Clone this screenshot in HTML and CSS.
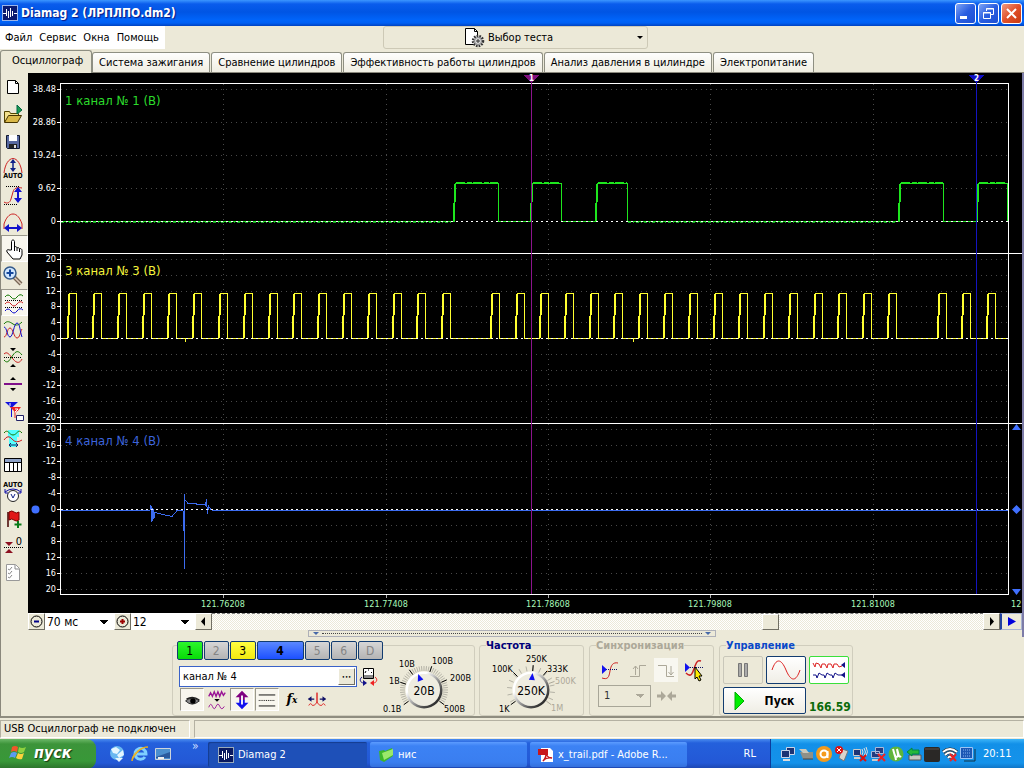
FILE: index.html
```html
<!DOCTYPE html>
<html lang="ru">
<head>
<meta charset="utf-8">
<title>Diamag 2</title>
<link rel="stylesheet" href="styles.css">
</head>
<body>
<header class="titlebar">
  <svg class="app-icon" width="16" height="16" viewBox="0 0 16 16"><rect width="16" height="16" fill="#9ab4e8"/><rect x="1" y="1" width="14" height="14" fill="#0a1a70"/><path d="M1 8.500h3M4.500 4v7M6.500 6v7M8.500 3v9M10.500 6v5M12 8.500h3" fill="none" stroke="#fff"/></svg>
  <h1 class="title">Diamag 2 (ЛРПЛПО.dm2)</h1>
  <button class="win-btn" aria-label="Свернуть"><svg width="19" height="19"><path d="M4 13.500h7" stroke="#fff" stroke-width="3"/></svg></button>
  <button class="win-btn" aria-label="Восстановить"><svg width="19" height="19" fill="none" stroke="#fff"><path d="M7.500 7V4.500h7v6H12M7 5h8M4.500 8.500h7v6h-7zM4 9h8"/></svg></button>
  <button class="win-btn win-close" aria-label="Закрыть"><svg width="19" height="19"><path d="M5 5l9 9M14 5l-9 9" stroke="#fff" stroke-width="2"/></svg></button>
</header>
<div class="menurow">
  <nav class="menu"><button>Файл</button><button>Сервис</button><button>Окна</button><button>Помощь</button></nav>
  <button class="test-select">
    <svg width="21" height="21" viewBox="0 0 21 21"><path d="M1.500 1.500h9l3 3v13h-12z" fill="#fff" stroke="#000"/><path d="M10.500 1.500v3h3" fill="none" stroke="#000"/><circle cx="14" cy="14" r="5" fill="#ccc" stroke="#333" stroke-width="2.500" stroke-dasharray="1.600 1.100"/><circle cx="14" cy="14" r="3.500" fill="#ddd" stroke="#888"/><path d="M14 12v4M12 14h4" stroke="#333"/></svg>
    <span>Выбор теста</span><i class="caret"></i>
  </button>
</div>
<nav class="tabs"><button class="tab active">Осциллограф</button><button class="tab">Система зажигания</button><button class="tab">Сравнение цилиндров</button><button class="tab">Эффективность работы цилиндров</button><button class="tab">Анализ давления в цилиндре</button><button class="tab">Электропитание</button></nav>
<main class="work">
  <aside class="tools">
    <button aria-label="Новый"><svg viewBox="0 0 24 24"><path d="M6.500 5.500h8l3 3v10h-11z" fill="#fff" stroke="#000"/><path d="M14.500 5.500v3h3" fill="none" stroke="#000"/></svg></button>
    <button aria-label="Открыть"><svg viewBox="0 0 24 24"><path d="M3.500 20V9.500h5l1 2h8V14" fill="#f3e08c" stroke="#554400"/><path d="M3.500 20.500l4-7h13l-4 7z" fill="#d9b848" stroke="#443300"/><path d="M16 3l5 5-5 4z" fill="#1c9a50" stroke="#064"/></svg></button>
    <button aria-label="Сохранить"><svg viewBox="0 0 24 24"><path d="M5.500 6.500h13v13h-12l-1-1z" fill="#5869a0" stroke="#101830"/><path d="M8 6h8v6H8z" fill="#fff"/><path d="M8 15h8v4H8z" fill="#222"/><path d="M13 16h2v3h-2z" fill="#ddd"/></svg></button>
    <button aria-label="Авто амплитуда"><svg viewBox="0 0 24 24" fill="none"><path d="M3 17C4 8 8 2.500 12 2.500S20 8 21 17" stroke="#c22"/><path d="M12 4v11" stroke="#128" stroke-width="1.500"/><path d="M9 7l3-4 3 4zM9 12l3 4 3-4z" fill="#128"/><text x="12" y="22" class="mini">AUTO</text></svg></button>
    <button aria-label="По вертикали"><svg viewBox="0 0 24 24" fill="none"><path d="M3 19c3 2 6 1 7-3l2-7c1-4 4-5 9-4" stroke="#c22"/><path d="M5 3.500h14M3 21.500h14" stroke="#000" stroke-dasharray="1 1"/><path d="M17 6v12" stroke="#11c" stroke-width="2"/><path d="M13 9l4-5 4 5zM13 15l4 5 4-5z" fill="#11c"/></svg></button>
    <button aria-label="По горизонтали"><svg viewBox="0 0 24 24" fill="none"><path d="M3 19V14c2-6 5-10 9-10s7 4 9 10v5" stroke="#c22"/><path d="M5 18h14" stroke="#11c" stroke-width="2"/><path d="M3 18l5-4v8zM21 18l-5-4v8z" fill="#11c"/></svg></button>
    <button class="pressed" aria-label="Рука"><svg viewBox="0 0 24 24"><path d="M9.500 13V4.500c0-2 3-2 3 0V10c1-1 2.500 0 2.500 1 1-1 2.500 0 2.500 1 1-1 2.500 0 2.500 1.500V18l-2 4h-7l-6-7c-1-2 1-3 2-2z" fill="#fff" stroke="#000"/><path d="M12.500 10v4M15 11v3M17.500 12v3" stroke="#000"/></svg></button>
    <button aria-label="Масштаб"><svg viewBox="0 0 24 24"><path d="M13 13l7 7" stroke="#765" stroke-width="4"/><path d="M13 13l7 7" stroke="#dcb" stroke-width="1.500"/><circle cx="9" cy="9" r="6" fill="#cfe6ff" stroke="#345a8a" stroke-width="1.500"/><path d="M5.500 9h7M9 5.500v7" stroke="#13479c" stroke-width="2"/></svg></button>
    <button class="pressed" aria-label="Раздельно"><svg viewBox="0 0 24 24" fill="none"><path d="M3 6q3-4 6 0t6 0 6-1" stroke="#170"/><path d="M3 13q3-4 6 0t6 0 6-1" stroke="#c22"/><path d="M3 20q3-4 6 0t6 0 6-1" stroke="#11c"/><path d="M3 9.500h18M3 16.500h18" stroke="#000" stroke-dasharray="1 1"/></svg></button>
    <button aria-label="Совместно"><svg viewBox="0 0 24 24" fill="none"><path d="M3 6c3-4 6-2 9 0s6 1 9-2" stroke="#170"/><path d="M3 19c3 0 3-9 6-9s4 10 7 10 3-6 5-9" stroke="#c22"/><path d="M3 9c3 0 3 10 6 10s4-14 7-14 3 9 5 14" stroke="#11c"/></svg></button>
    <button aria-label="Наложение"><svg viewBox="0 0 24 24" fill="none"><path d="M3 9c3-3 5 0 9 5s7 4 9 0" stroke="#c22"/><path d="M3 15c4 5 6-1 9-5s5-5 9 0" stroke="#170"/><path d="M3 12.500h18" stroke="#000" stroke-dasharray="1 1"/><path d="M9 3h6l-3 3zM9 22h6l-3-3z" fill="#000"/></svg></button>
    <button aria-label="Линия"><svg viewBox="0 0 24 24"><path d="M3 12h18" stroke="#80108a" stroke-width="2"/><path d="M9 8l3-3 3 3zM9 16l3 3 3-3z"/></svg></button>
    <button aria-label="Курсоры"><svg viewBox="0 0 24 24"><path d="M4 3h13l-6.500 6z" fill="#11d"/><path d="M10.500 8v10" stroke="#11d"/><path d="M9 8h11l-5 6z" fill="#e22"/><path d="M14 12v7" stroke="#e22"/><path d="M9 4v3M14 10h3l-3 3h3" stroke="#fff" fill="none"/><path d="M15.500 16.500h7v5h-7z" fill="#fff" stroke="#226"/></svg></button>
    <button aria-label="Измерение"><svg viewBox="0 0 24 24" fill="none"><path d="M7 4h11v7h-2v10H8V11H7z" fill="#5ff"/><path d="M3 7c4-5 5 2 9 2s5-7 9-2" stroke="#170"/><path d="M3 14q4-6 8-1t10 1" stroke="#c22"/><path d="M8 19h9M10 17l-2 2 2 2M15 17l2 2-2 2" stroke="#126"/></svg></button>
    <button aria-label="Таблица"><svg viewBox="0 0 24 24"><path d="M3.500 5.500h17v13h-17z" fill="#fff" stroke="#000"/><path d="M4 6h16v3H4z" fill="#8ea2c8"/><path d="M3 9.500h17M8.500 9v9M12.500 9v9M16.500 9v9" stroke="#000"/></svg></button>
    <button aria-label="Авто вольтметр"><svg viewBox="0 0 24 24" fill="none"><text x="12" y="7" class="mini">AUTO</text><circle cx="12" cy="16" r="5.500" fill="#fff" stroke="#222"/><path d="M10 14l2 4 2-4" stroke="#128"/><path d="M4 12q8-6 16 0M4 9v4h3M20 9v4h-3" stroke="#11a"/></svg></button>
    <button aria-label="Метка"><svg viewBox="0 0 24 24"><path d="M7 5v15" stroke="#400" stroke-width="1.500"/><path d="M8 5q3-2 5 0t5 0v8q-3 2-5 0t-5 0z" fill="#e01818" stroke="#700"/><path d="M17 14v7M13.500 17.500h7" stroke="#087a18" stroke-width="2"/></svg></button>
    <button aria-label="Ноль"><svg viewBox="0 0 24 24"><path d="M3 13.500h19" stroke="#000" stroke-dasharray="1 1"/><path d="M4 8h8l-4 4zM4 19h8l-4-4z" fill="#8c1020"/><text x="18" y="11" class="zero">0</text></svg></button>
    <button aria-label="Отчёт"><svg viewBox="0 0 24 24"><path d="M5.500 3.500h9l4 4v12h-13z" fill="#fff" stroke="#999"/><path d="M7 8l1.500 1L11 6M7 12l1.500 1L11 10M7 16l1.500 1L11 14M14 4v4h4" fill="none" stroke="#888"/></svg></button>
  </aside>
  <section class="scope">
    <svg id="plot" class="plot" viewBox="28 73 994 540" role="img" aria-label="Осциллограммы"></svg>
    <div class="scrollrow">
      <button class="sq" aria-label="Уменьшить"><svg width="13" height="13" fill="none" stroke="#000"><circle cx="6.500" cy="6.500" r="5.500"/><path d="M4 6.500h5" stroke="#008" stroke-width="2"/></svg></button>
      <select class="combo combo-ms" aria-label="Развёртка"><option>70 мс</option></select>
      <button class="sq" aria-label="Увеличить"><svg width="13" height="13" fill="none" stroke="#000"><circle cx="6.500" cy="6.500" r="5.500"/><path d="M4 6.500h5M6.500 4v5" stroke="#900" stroke-width="2"/></svg></button>
      <select class="combo combo-n" aria-label="Масштаб"><option>12</option></select>
      <button class="sq" aria-label="Влево"><svg width="9" height="9"><path d="M6 0v9L2 4.500z"/></svg></button>
      <div class="track"><span class="thumb"></span></div>
      <button class="sq" aria-label="Вправо"><svg width="9" height="9"><path d="M3 0v9l4-4.500z"/></svg></button>
      <button class="sq play" aria-label="Проиграть"><svg width="9" height="9"><path d="M1 0v9l8-4.500z" fill="#00d"/></svg></button>
    </div>
    <div class="splitter"><i></i><span></span><i></i></div>
  </section>
</main>
<div class="panels">
  <section class="group channel">
    <div class="ch-left">
      <div class="ch-btns"><button class="g">1</button><button>2</button><button class="y">3</button><button class="b">4</button><button>5</button><button>6</button><button>D</button></div>
      <div class="ch-name"><div class="field"><input aria-label="Имя канала" value="канал № 4"><button aria-label="Выбрать">•••</button></div>
        <svg width="20" height="20" viewBox="0 0 20 20"><path d="M4.500 1.500h10v10h-10z" fill="#fff" stroke="#000"/><path d="M5 8h9v3H5z" fill="#888"/><path d="M6 6l1-2m2-1h1m2 2l1 1" stroke="#000"/><path d="M3 10c-3 2-2 6 2 6" fill="none" stroke="#118"/><path d="M4 13l4 3-4 3z" fill="#118"/><path d="M16 10c3 2 2 6-2 6" fill="none" stroke="#e22"/><path d="M15 13l-4 3 4 3z" fill="#e22"/></svg></div>
      <div class="ch-icons">
        <button class="pressed" aria-label="Показать"><svg viewBox="0 0 24 24"><path d="M5 13q7-6 15 0q-8 7-15 0z" fill="#888" stroke="#222"/><circle cx="13" cy="13" r="3"/><path d="M6 11q7-4 14 1" stroke="#222" fill="none" stroke-width="1.500"/></svg></button>
        <button aria-label="Фильтр"><svg viewBox="0 0 24 24" fill="none"><path d="M3 8l2-4 2 4 2-5 2 5 2-5 2 5 2-5 2 4 2-3" stroke="#9a1496" stroke-width="1.500"/><path d="M3 20q2-6 4-1t4 0 4 0 5 0" stroke="#9a1496"/><path d="M9 11h6l-3 3z" fill="#000"/></svg></button>
        <button class="pressed" aria-label="Инверсия"><svg viewBox="0 0 24 24"><path d="M5 9l7-7 7 7h-4v3H9V9z" fill="#800080"/><path d="M5 15l7 7 7-7h-4v-3H9v3z" fill="#11e"/><path d="M12 7v10" stroke="#fff" stroke-width="2"/></svg></button>
        <button class="pressed" aria-label="Линии"><svg viewBox="0 0 24 24"><path d="M3 6.500h18M3 18.500h18" stroke="#000"/><path d="M3 12.500h18" stroke="#000" stroke-dasharray="1 1"/></svg></button>
        <button class="fx" aria-label="Функция">f<small>x</small></button>
        <button aria-label="Расстояние"><svg viewBox="0 0 24 24" fill="none"><path d="M3 18q2-4 4 0 4 0 5-5V4v9q1 5 5 5 2-4 4 0" stroke="#d22"/><path d="M3 11h6M15 11h6" stroke="#116" stroke-width="1.500"/><path d="M2 11l4-3v6zM22 11l-4-3v6z" fill="#116"/></svg></button>
      </div>
    </div>
    <svg class="knob" id="knobV" width="88" height="74" viewBox="384 643 88 74"></svg>
  </section>
  <section class="group freq"><h2>Частота</h2><svg class="knob" id="knobF" width="98" height="70" viewBox="482 647 98 70"></svg></section>
  <section class="group sync"><h2>Синхронизация</h2>
    <div class="row sync-icons">
      <button aria-label="Уровень"><svg viewBox="0 0 24 24" fill="none"><path d="M4 20c6 2 7-1 8-7s3-9 8-8" stroke="#c22"/><path d="M8 11.500h12" stroke="#116" stroke-dasharray="1 1"/><path d="M4 7v9l5-4.500z" fill="#11e"/></svg></button>
      <button aria-label="Фронт"><svg viewBox="0 0 24 24" fill="none" stroke="#aca899"><path d="M4 18.500h9.500v-11H20"/><path d="M9.500 17V8M7 11l2.500-3 2.500 3"/></svg></button>
      <button class="lit" aria-label="Спад"><svg viewBox="0 0 24 24" fill="none" stroke="#aca899"><path d="M4 7.500h8.500v11H20"/><path d="M17 8v9M14.500 14l2.500 3 2.500-3"/></svg></button>
      <button aria-label="Захват"><svg viewBox="0 0 24 24" fill="none"><path d="M4 15c6 6 7-2 9-7s3-6 6-5" stroke="#c22" stroke-width="1.500"/><path d="M8 9.500h13" stroke="#116" stroke-dasharray="1 1"/><path d="M3 5v9l5-4.500z" fill="#11e"/><path d="M13 9l7 9h-3l2 4-2 1-2-4-2 2z" fill="#fe0" stroke="#000"/></svg></button>
    </div>
    <div class="row"><select class="sync-sel" disabled aria-label="Канал синхронизации"><option>1</option></select><svg width="19" height="12" viewBox="0 0 19 12"><path d="M0 6h6M19 6h-6" stroke="#aca899" stroke-width="3"/><path d="M4 1l5 5-5 5zM15 1l-5 5 5 5z" fill="#aca899"/></svg></div>
  </section>
  <section class="group ctl"><h2>Управление</h2>
    <div class="ctl-grid">
      <button class="big off" aria-label="Пауза"><svg width="14" height="16"><path d="M2.500 1.500h3v13h-3zM8.500 1.500h3v13h-3z" fill="#aaa" stroke="#777"/></svg></button>
      <button class="big" aria-label="Синус"><svg width="30" height="22" fill="none"><path d="M1 11C5-1 10-1 15 11s10 12 14 0" stroke="#d22"/></svg></button>
      <button class="big green" aria-label="Поток"><svg width="34" height="20" fill="none"><path d="M1 3l2 4 1-4 3 1 2 4 1-4 3 0 2 4 1-4 3 0 2 4 1-4 3 0 2 3 3-1" stroke="#d22"/><path d="M1 15h3l1 3 2-5 3 2h2l1 3 2-5 3 2h2l1 3 2-5 3 2h5" stroke="#118"/><path d="M33 2v6l-4-3zM33 12v6l-4-3z" fill="#118"/></svg></button>
      <button class="start-btn"><svg width="11" height="20"><path d="M1 1v18l9-9z" fill="#0e0" stroke="#0a0"/></svg><b>Пуск</b></button>
      <output class="val">166.59</output>
    </div>
  </section>
</div>
<footer class="status"><span class="msg">USB Осциллограф не подключен</span><span class="rest"></span></footer>
<div class="taskbar">
  <button class="start"><svg width="20" height="20" viewBox="0 0 20 20"><path d="M3 4q3-2 6 0L8 9Q5 7 2 9z" fill="#f2562a"/><path d="M10 4q3 2 7 0l-2 5q-3 2-6 0z" fill="#8fd13f"/><path d="M2 10q3-2 6 0l-2 5q-3-2-6 0z" fill="#5a9cf0"/><path d="M9 10q3 2 6 0l-2 6q-3 1-6-1z" fill="#fcd23c"/></svg>пуск</button>
  <div class="quick">
    <svg width="18" height="18" viewBox="0 0 18 18"><circle cx="9" cy="8" r="7" fill="#69b8f0"/><path d="M3 4l5-2 4 3-3 4-4-1zM9 10l6-5 1 5-5 3zM7 13h8l-4 4z" fill="#e4f6ff"/></svg>
    <svg width="18" height="18" viewBox="0 0 18 18" fill="none"><path d="M14 12a5.500 5.500 0 1 1 1-3H5" stroke="#7fd0ff" stroke-width="3"/><path d="M1 16C0 10 10 1 17 2c-7 0-14 8-16 14z" fill="#f5c43a" stroke="#e8ad20"/></svg>
    <svg width="18" height="18" viewBox="0 0 18 18"><path d="M1.500 3.500h15v11h-15z" fill="#4b8fcf" stroke="#cdd5dc"/><path d="M2 12L16 7v6H2z" fill="#2a5a9e"/><path d="M4 12h6v2H4z" fill="#eee"/></svg>
    <span class="chev">»</span>
  </div>
  <button class="task on"><svg width="16" height="16" viewBox="0 0 16 16"><rect width="16" height="16" fill="#9ab"/><rect x="1" y="1" width="14" height="14" fill="#0a1a60"/><path d="M1 8.500h3M4.500 4v7M6.500 6v7M8.500 3v9M10.500 6v5M12 8.500h3" fill="none" stroke="#fff"/></svg>Diamag 2</button>
  <button class="task"><svg width="16" height="16" viewBox="0 0 16 16"><path d="M1 4l5-1 1 1 7-3 1 8-9 6-4-2z" fill="#3cb52c"/><path d="M4 6l11-4v6l-9 5z" fill="#9be86a"/></svg>нис</button>
  <button class="task"><svg width="16" height="16" viewBox="0 0 16 16"><path d="M3 1h9l3 3v11H3z" fill="#fff"/><path d="M0 2h10v6H0z" fill="#c8171c"/><path d="M5 14c4-4 3-8 3-9 0 4 3 6 6 6-4-1-8 1-9 3z" fill="none" stroke="#c8171c" stroke-width="1.500"/></svg>x_trail.pdf - Adobe R...</button>
  <span class="lang">RL</span>
  <div class="tray">
    <svg viewBox="0 0 16 16"><path d="M6.500 1.500h8v7h-8z" fill="#1c3474" stroke="#c8d4e8"/><path d="M1.500 4.500h8v7h-8z" fill="#1c3474" stroke="#c8d4e8"/><path d="M3 14h7" stroke="#ddd" stroke-width="2"/></svg>
    <svg viewBox="0 0 16 16"><path d="M2 6h13v7H5z" fill="#8f9088"/><path d="M1 3h7l3 4H5z" fill="#c9c8bb"/><path d="M5 13h10" stroke="#444"/></svg>
    <svg viewBox="0 0 16 16"><circle cx="8" cy="8" r="8" fill="#f49a1c"/><circle cx="8" cy="8" r="3.500" fill="none" stroke="#fff" stroke-width="2"/><path d="M11.500 5v7" stroke="#fff" stroke-width="2"/></svg>
    <svg viewBox="0 0 16 16"><path d="M8 3l6 2-4 10-5-3z" fill="#d8d4cc" stroke="#777"/><circle cx="5" cy="4" r="4" fill="#d11"/><path d="M3 2l4 4M7 2L3 6" stroke="#fff"/></svg>
    <svg viewBox="0 0 16 16"><path d="M1.500 3.500h7v6h-7z" fill="#1c3474" stroke="#ccc"/><path d="M2 12h6" stroke="#ccc" stroke-width="2"/><path d="M10 3q2 3 0 6M12 2q3 4 0 8M14 1q3 5 0 9" stroke="#ddd" fill="none"/><path d="M8 9l6 6M14 9l-6 6" stroke="#d11" stroke-width="2"/></svg>
    <svg viewBox="0 0 16 16"><path d="M5.500 1.500h8v6h-8zM1.500 5.500h8v6h-8z" fill="#243c80" stroke="#aab8d8"/><path d="M2 14h6" stroke="#ccc" stroke-width="2"/><path d="M8 8l7 7M15 8l-7 7" stroke="#e22" stroke-width="2"/></svg>
    <svg viewBox="0 0 16 16"><circle cx="8" cy="8" r="7.500" fill="#5fb53a"/><path d="M5 3l2 7q3 2 3-1L9 3l2 7q1 1 2 0M7 9l1 5" stroke="#fff" stroke-width="2" fill="none"/></svg>
    <svg viewBox="0 0 16 16"><path d="M3 9h12v5H3z" fill="#c8c8c0" stroke="#555"/><path d="M1 6l5-4v2h7v4H6v2z" fill="#27b83a" stroke="#084"/></svg>
    <svg viewBox="0 0 16 16"><rect width="16" height="15" y="1" rx="2" fill="#2a2826"/><path d="M1 3h14" stroke="#5a5048"/></svg>
    <svg viewBox="0 0 16 16" fill="none"><path d="M1 6q7-6 14 0M3 9q5-5 10 0M6 12q2-3 4 0" stroke="#222" stroke-width="3"/><path d="M1 6q7-6 14 0M3 9q5-5 10 0M6 12q2-3 4 0" stroke="#fff" stroke-width="2"/><path d="M8 8l6 7M14 8l-6 7" stroke="#e22" stroke-width="2"/></svg>
    <svg viewBox="0 0 16 16"><path d="M.5 1.500h12v11H.5z" fill="#1c57b4" stroke="#9cc4f4"/><path d="M3 4h7M3 7h7M3 10h7" stroke="#8ab8f0" stroke-dasharray="1 1"/><path d="M15 3v12H4" stroke="#134" fill="none"/></svg>
    <time>20:11</time>
  </div>
</div>
<script src="script.js"></script>
</body>
</html>
```
FILE: styles.css
```css
* { box-sizing: border-box; }
body { margin: 0; background: #ece9d8; color: #000; font: 11px/14px "DejaVu Sans Condensed", "Noto Sans", sans-serif; min-height: 100vh; display: flex; flex-direction: column; }
button, input, select { font: inherit; color: inherit; margin: 0; padding: 0; border: 0; background: none; }
svg { display: block; flex: none; }
h1, h2 { margin: 0; font-size: inherit; }

.titlebar { height: 26px; display: flex; align-items: center; gap: 2px; padding: 0 2px; background: linear-gradient(#3c96ff 0, #0a5cec 4px, #0055e4 12px, #0064fa 20px, #0060f4 23px, #0042c0 26px); color: #fff; }
.title { flex: 1; padding-left: 1px; font-size: 12px; line-height: 18px; text-shadow: 1px 1px 1px #0a1883; }
.win-btn { width: 21px; height: 21px; border: 1px solid #fff; border-radius: 3px; background: linear-gradient(135deg, #7ea4f6, #2a5ee0 50%, #1c4fd4); }
.win-close { background: linear-gradient(135deg, #f09a80, #e0502a 50%, #c83a10); }

.menurow { height: 24px; display: grid; grid-template-columns: 383fr 265px 376fr; align-items: start; }
.menu { justify-self: start; display: flex; gap: 7px; height: 23px; padding: 0 6px 0 5px; background: #fff; }
.test-select { height: 23px; display: grid; grid-template-columns: 10fr auto 9fr; align-items: center; gap: 3px; border: 1px solid #cdc9b6; border-radius: 3px; }
.test-select svg { justify-self: end; }
.caret { justify-self: end; margin-right: 4px; border: 3px solid transparent; border-top-color: #000; border-bottom: 0; }

.tabs { height: 23px; display: flex; align-items: flex-end; gap: 1px; border-bottom: 1px solid #8a887c; }
.tab { height: 20px; padding: 0 6px; border: 1px solid #8e8f82; border-bottom: 0; border-radius: 3px 3px 0 0; background: linear-gradient(#fefefd, #f0eee2); white-space: nowrap; }
.tab.active { height: 23px; padding: 0 8px 2px 11px; margin-bottom: -1px; margin-right: -1px; background: #ece9d8; }

.work { display: flex; border-right: 2px solid #7d7ca8; border-left: 1px solid #8a887c; }
.tools { width: 27px; flex: none; display: flex; flex-direction: column; }
.tools button { width: 27px; height: 27px; display: grid; place-items: center start; }
.tools svg { width: 24px; height: 24px; }
.pressed { background: #f8f6ee; border: 1px solid; border-color: #9a988c #fff #fff #9a988c; }
.mini { font-size: 7px; font-weight: bold; text-anchor: middle; fill: #000; }
.zero { font-size: 11px; text-anchor: middle; }
.scope { flex: 1; min-width: 0; }
.plot { width: 100%; height: auto; background: #000; shape-rendering: crispEdges; }
.plot text { font-size: 9px; fill: #fff; }
.plot .end { text-anchor: end; }
.plot .mid { text-anchor: middle; }
.plot .time { fill: #a8f8b8; }
.plot .name { font-size: 13px; }
.plot .tag { font-size: 8px; font-weight: bold; text-anchor: middle; }

.scrollrow { height: 17px; display: flex; }
.sq { width: 17px; flex: none; display: grid; place-items: center; background: #ece9d8; border: 1px solid; border-color: #fff #716f64 #716f64 #fff; }
.sq.play { width: 22px; border: 1px solid #a9b4d0; border-left: 2px solid #2040a0; }
.combo { appearance: none; padding-left: 2px; font-size: 12px; border-radius: 0; background-color: #fff; background-image: linear-gradient(45deg, transparent 50%, #000 50%), linear-gradient(-45deg, transparent 50%, #000 50%); background-repeat: no-repeat; background-size: 4px 4px; background-position: right 10px top 7px, right 6px top 7px; }
.combo-ms { width: 69px; }
.combo-n { width: 64px; }
.track { flex: 1; background: repeating-conic-gradient(#fff 0 25%, #ece9d8 0 50%) 0 0 / 2px 2px; display: flex; justify-content: flex-end; padding-right: 204px; border-top: 1px dashed #777; }
.thumb { width: 17px; background: #ece9d8; border: 1px solid; border-color: #fff #716f64 #716f64 #fff; }
.splitter { width: 41%; height: 7px; margin-left: 280px; display: flex; align-items: center; gap: 3px; padding: 0 4px; border: 1px solid #aeb0b8; }
.splitter span { flex: 1; border-top: 1px dotted #444; }
.splitter i { border: 3px solid transparent; border-top-color: #4668a8; border-bottom: 0; }

.panels { display: flex; gap: 4px; padding: 4px 0 1px 171px; height: 81px; border-left: 1px solid #8a887c; border-bottom: 2px solid #8f8d80; }
.group { position: relative; border: 1px solid #d0cdbd; border-radius: 3px; margin-top: 4px; height: 71px; }
.group h2 { position: absolute; top: -7px; left: 6px; line-height: 14px; background: #ece9d8; }
.channel { width: 303px; display: flex; }
.ch-left { margin-top: -5px; padding-left: 4px; width: 210px; }
.ch-btns { display: flex; gap: 1px; }
.ch-btns button { width: 26px; height: 19px; border: 1px solid #123c70; border-radius: 2px; background: linear-gradient(#d6d6d6, #b4b4b4); color: #858585; font-size: 12px; }
.ch-btns .g { background: linear-gradient(#2cf52c, #08dc08); color: #000; }
.ch-btns .y { background: linear-gradient(#ffff40, #f2ea10); color: #000; }
.ch-btns .b { width: 48px; background: linear-gradient(#5a88ff, #1c50ff); color: #000; font-weight: bold; }
.ch-name { display: flex; align-items: center; gap: 2px; padding: 6px 0 1px 2px; }
.field { width: 178px; height: 21px; display: flex; border: 1px solid #3a62c8; background: #fff; padding: 1px; }
.field input { flex: 1; min-width: 0; padding-left: 2px; }
.field button { width: 17px; font-size: 6px; background: #ece9d8; border: 1px solid; border-color: #fff #716f64 #716f64 #fff; }
.ch-icons { display: flex; gap: 1px; padding-left: 3px; }
.ch-icons button { width: 24px; height: 23px; display: grid; place-items: center; }
.ch-icons svg { width: 22px; height: 22px; }
.ch-icons .fx { display: block; font: italic bold 13px/20px "DejaVu Serif", serif; }
.fx small { font-size: 9px; }
.knob { margin-top: -3px; }
.knob text { font-size: 9px; }
.knob .big-val { font-size: 12px; text-anchor: middle; }
.knob .dim { fill: #aca899; }
.freq { width: 105px; }
.freq h2 { color: #000078; }
.freq .knob { margin: 1px auto 0; }
.sync { width: 125px; margin-left: 1px; }
.sync h2 { color: #aca899; }
.row { display: flex; align-items: center; gap: 6px; padding-left: 8px; }
.sync-icons { padding: 12px 0 3px 8px; gap: 4px; }
.sync-icons button { width: 24px; height: 24px; }
.sync-icons svg { width: 24px; height: 24px; }
.lit { background: #f8f7f0; }
.sync-sel { appearance: none; width: 53px; height: 22px; padding-left: 5px; border: 1px solid #a8a698; border-radius: 0; opacity: 1; color: #333; background-image: linear-gradient(45deg, transparent 50%, #aca899 50%), linear-gradient(-45deg, transparent 50%, #aca899 50%); background-size: 4px 4px; background-repeat: no-repeat; background-position: right 10px center, right 6px center; }
.ctl { width: 134px; margin-left: 1px; }
.ctl h2 { color: #0a48c8; }
.ctl-grid { display: grid; grid-template-columns: 40px 40px 40px; gap: 3px; padding: 10px 0 0 3px; }
.big { height: 28px; display: grid; place-items: center; border: 1px solid #123c70; border-radius: 2px; background: linear-gradient(#fff, #f0eee6); }
.big.off { border-color: #c9c7ba; background: #ece9d8; }
.big.green { border: 1px solid #3ae03a; background: #fff; }
.start-btn { grid-column: span 2; height: 27px; display: grid; grid-template-columns: 30px 1fr; align-items: center; justify-items: center; border: 1px solid #123c70; border-radius: 2px; background: linear-gradient(#fff, #efede4); }
.start-btn b { font-size: 12px; }
.val { align-self: end; color: #0a6a0a; font-weight: bold; font-size: 12px; line-height: 14px; }

.status { height: 21px; display: flex; gap: 4px; padding: 2px 0 1px; }
.status span { border: 1px solid; border-color: #b4b1a2 #fff #fff #b4b1a2; padding: 1px 3px; }
.msg { width: 190px; white-space: nowrap; }
.rest { flex: 1; }

.taskbar { height: 30px; display: flex; align-items: stretch; background: linear-gradient(#4a8cf0, #2460dc 4px, #2358d6 24px, #1c44ac); color: #fff; }
.start { width: 96px; display: flex; align-items: center; gap: 5px; padding: 0 0 2px 9px; border-radius: 0 9px 9px 0; background: linear-gradient(#6cb868, #3c943a 5px, #389838 22px, #2a702a); font: italic bold 16px/20px "DejaVu Sans Condensed", sans-serif; text-shadow: 1px 1px 1px #143814; }
.quick { width: 112px; display: flex; align-items: center; gap: 5px; padding-left: 12px; }
.chev { align-self: flex-start; margin-left: 15px; font-size: 12px; color: #c8dcff; }
.task { width: 157px; margin: 3px 3px 2px 0; display: flex; align-items: center; gap: 4px; padding-left: 8px; border-radius: 2px; background: linear-gradient(#5c9cff, #3c82f4 4px, #3a7ef0 20px, #3470dc); white-space: nowrap; }
.task.on { background: #1e50b8; box-shadow: inset 1px 1px 1px #153c90; width: 159px; padding-left: 10px; }
.lang { margin-left: auto; align-self: center; padding-right: 14px; }
.tray { width: 254px; display: flex; align-items: center; gap: 2px; padding-left: 9px; border-left: 1px solid #0c3c9c; background: linear-gradient(#3cb4f8, #1290e8 5px, #1492ea 24px, #0f70c0); }
.tray svg { width: 16px; height: 16px; }
.tray time { margin-left: 5px; }
```
FILE: script.js
```js
const range = (n) => [...Array(n).keys()];

function text(x, y, cls, s, extra = '') {
  return `<text x="${x}" y="${y}" class="${cls}" ${extra}>${s}</text>`;
}
function line(x1, y1, x2, y2, color, dash = '', width = 1) {
  return `<path d="M${x1} ${y1}L${x2} ${y2}" stroke="${color}" fill="none" stroke-dasharray="${dash}" stroke-width="${width}"/>`;
}

/* Plot: three stacked channels with a shared time axis */
const GRID = '#484848';
const channels = [
  { labels: ['38.48', '28.86', '19.24', '9.62', '0'], top: 89, step: 33, zero: 221 },
  { labels: range(11).map((i) => 20 - 4 * i), top: 259, step: 15.8, zero: 338 },
  { labels: range(11).map((i) => -20 + 4 * i), top: 429, step: 16, zero: 509 },
];
let out = '';
for (const ch of channels) {
  ch.labels.forEach((label, i) => {
    const y = Math.round(ch.top + ch.step * i) + 0.5;
    out += line(61, y, 1008, y, GRID, '1 4');
    out += line(57, y, 61, y, '#fff');
    out += text(56, y + 2.5, 'end', label);
  });
}
[223, 386, 548, 710, 873].forEach((x, i) => {
  out += line(x + 0.5, 84, x + 0.5, 594, GRID, '1 4');
  out += line(x + 0.5, 594, x + 0.5, 598, '#aaa');
  out += text(x, 607, 'mid time', ['121.76208', '121.77408', '121.78608', '121.79808', '121.81008'][i]);
});
out += text(1011, 607, 'time', '12');
out += '<path d="M60.5 83.500H1008.500V594.500H60.500zM28 253.500H1022M28 423.500H1022" fill="none" stroke="#fff"/>';

function pulseTrain(list, low, high, ramp) {
  let d = `M61 ${low}`;
  for (const [a, b] of list) {
    d += `H${a}L${a + ramp} ${high}H${b}V${low}`;
  }
  return d + 'H1008';
}
const green = [[453, 498], [530, 561], [595, 627], [898, 943], [976, 1007]];
const starts = [67, 92, 117, 142, 167, 192, 218, 243, 268, 292, 317, 342, 367, 392, 416, 441,
  490, 515, 539, 564, 589, 613, 638, 663, 688, 713, 738, 763, 788, 813, 837, 862, 887, 937, 961, 986];
const yellow = starts.map((x) => [x + 0.5, x + 9.5]);
out += `<path d="${pulseTrain(green.map(([a, b]) => [a + 0.5, b + 0.5]), 221.5, 183.5, 2)}" fill="none" stroke="#1ee61e"/>`;
out += green.map(([a, b]) => line(a + 3, 182.5, b, 182.5, '#1ee61e', '9 2 5 1') + line(a + 1, 222, a + 2, 184, '#1ee61e', '', 2)).join('');
out += line(61, 222.5, 452, 222.5, '#1c9c2c', '3 2 1 2') + line(628, 222.5, 897, 222.5, '#1c9c2c', '3 2 1 2');
out += `<path d="${pulseTrain(yellow, 338.5, 293.5, 2)}" fill="none" stroke="#ffff30"/>`;
out += yellow.map(([a]) => line(a + 0.5, 338, a + 1.5, 294, '#ffff30', '', 2)).join('');
out += line(185.5, 339, 185.5, 342, '#ffff30') + line(633.5, 339, 633.5, 342, '#ffff30');
out += '<path d="M61 510.500H150l1-5 1 16 1-13 1 10 1-6 8 2 9 2 5-6h6l1 20M184.500 494V569M185.500 500l2 3 18 2 1-6 1 15 1-8 2 3 2 1H1008" fill="none" stroke="#3c6cf0"/>';
out += '<path d="M61 510.500H150M212 510.500H1008" stroke="#3c6cf0"/>';
for (const ch of channels) out += line(61, ch.zero + 0.5, 1008, ch.zero + 0.5, '#fff', '2 3');

out += text(65, 105, 'name', '1 канал № 1 (B)', 'style="fill:#2cdc2c"');
out += text(65, 275, 'name', '3 канал № 3 (B)', 'style="fill:#f4f43c"');
out += text(65, 445, 'name', '4 канал № 4 (B)', 'style="fill:#3c64dc"');

out += line(531.5, 81, 531.5, 594, '#8c148c') + line(976.5, 81, 976.5, 594, '#1414c0');
out += '<path d="M524 75h15l-7.500 8z" fill="#80107c"/><path d="M969 75h15l-7.500 8z" fill="#1010c8"/>';
out += text(531.5, 81, 'tag', '1') + text(976.5, 81, 'tag', '2');
out += '<g fill="#4070ff" shape-rendering="auto"><circle cx="35.500" cy="509.500" r="4"/><path d="M1012 430h9l-4.500-6zM1012 589h9l-4.500 6zM1016.500 505l4.500 4.500-4.500 4.500-4.500-4.500z"/></g>';
document.getElementById('plot').innerHTML = out;

/* Rotary knobs */
function knob(id, cx, cy, value, pointer, marks, labels) {
  const ray = (deg, r1, r2, color) => {
    const a = deg * Math.PI / 180;
    return line(cx + r1 * Math.sin(a), cy - r1 * Math.cos(a), cx + r2 * Math.sin(a), cy - r2 * Math.cos(a), color);
  };
  let s = `<defs><linearGradient id="${id}g" x1="0" y1="0" x2="1" y2="1"><stop offset=".3" stop-color="#fff"/><stop offset=".7" stop-color="#555"/><stop offset="1"/></linearGradient></defs>`;
  for (let a = -120; a <= 120; a += marks) s += ray(a, 19, 24, '#b4b2a6');
  for (const [x, y, t, deg, cls] of labels) s += ray(deg, 19, 25, cls ? '#aca899' : '#000') + text(x, y, cls, t);
  s += `<circle cx="${cx}" cy="${cy}" r="18.500" fill="url(#${id}g)"/><circle cx="${cx}" cy="${cy}" r="16" fill="#eeece0"/>`;
  s += `<path d="M-3 -10L0 -17L3 -10z" fill="#1010f0" transform="translate(${cx} ${cy}) rotate(${pointer})"/>`;
  s += text(cx, cy + 5, 'big-val', value);
  document.getElementById(id).innerHTML = s;
}
knob('knobV', 425, 690, '20В', -20, 6, [
  [384, 712, '0.1В', -126, ''], [390, 684, '1В', -72, ''], [400, 667, '10В', -36, ''],
  [433, 664, '100В', 18, ''], [451, 681, '200В', 66, ''], [445, 712, '500В', 126, '']]);
knob('knobF', 530, 690, '250K', 5, 18, [
  [498, 712, '1K', -126, ''], [491, 672, '100K', -45, ''], [525, 662, '250K', 5, ''],
  [546, 672, '333K', 40, ''], [554, 684, '500K', 70, 'dim'], [550, 711, '1M', 126, 'dim']]);
```
